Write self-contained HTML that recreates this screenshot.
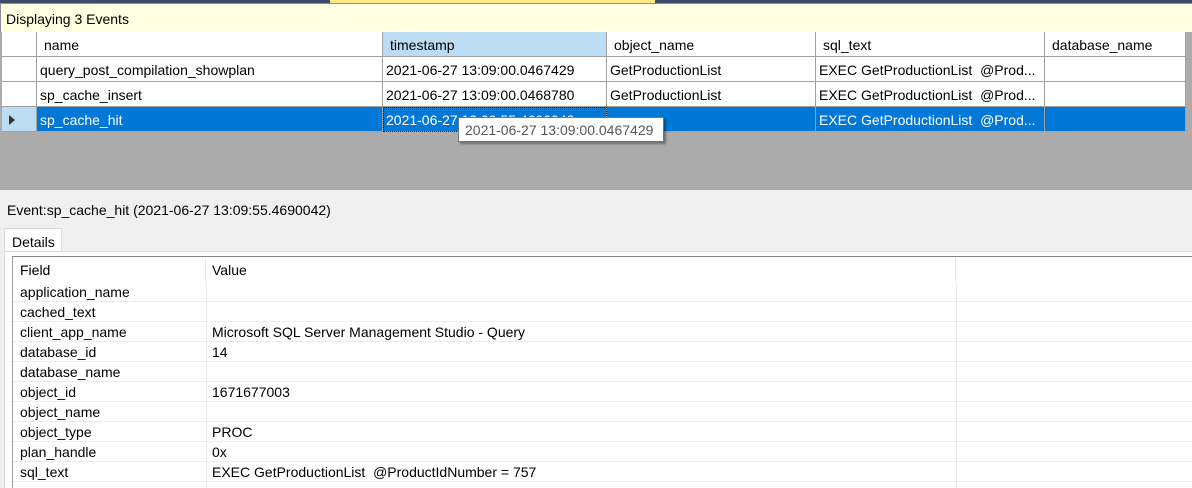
<!DOCTYPE html>
<html><head><style>
*{margin:0;padding:0;box-sizing:border-box}
body{width:1192px;height:488px;overflow:hidden;background:#f0f0f0;font-family:"Liberation Sans",sans-serif;font-size:14px;color:#000;position:relative}
.a{position:absolute;white-space:nowrap}
.c{position:absolute;line-height:27px;padding-left:3px;border-right:1px solid #a0a0a0;border-bottom:1px solid #a0a0a0;overflow:hidden;white-space:nowrap}
.f{position:absolute;left:20px;line-height:21px}
.v{position:absolute;left:212px;line-height:21px}
.sep{position:absolute;left:13px;right:0;height:1px;background:#ececec}
</style></head><body>
<div class="a" style="left:0;top:0;width:1192px;height:3px;background:#3b4c6b"></div>
<div class="a" style="left:330px;top:0;width:325px;height:3px;background:#ffe88c"></div>
<div class="a" style="left:0;top:3px;width:1192px;height:29px;background:#ffffe1;border-top:1px solid #8a8f9a;border-left:1px solid #8a8f9a;padding:7px 0 0 5px">Displaying 3 Events</div>
<div class="a" style="left:0;top:32px;width:1192px;height:158px;background:#ababab"></div>
<div class="a" style="left:2px;top:32px;width:1184px;height:100px;background:#fff"></div>
<!-- header -->
<div class="c" style="left:2px;top:32px;width:35px;height:25px"></div>
<div class="c" style="left:37px;top:32px;width:346px;height:25px;padding-left:7px">name</div>
<div class="c" style="left:383px;top:32px;width:224px;height:25px;background:#bcdcf4;padding-left:7px">timestamp</div>
<div class="c" style="left:607px;top:32px;width:209px;height:25px;padding-left:7px">object_name</div>
<div class="c" style="left:816px;top:32px;width:229px;height:25px;padding-left:7px">sql_text</div>
<div class="c" style="left:1045px;top:32px;width:141px;height:25px;padding-left:7px">database_name</div>
<!-- row1 -->
<div class="c" style="left:2px;top:57px;width:35px;height:25px"></div>
<div class="c" style="left:37px;top:57px;width:346px;height:25px">query_post_compilation_showplan</div>
<div class="c" style="left:383px;top:57px;width:224px;height:25px">2021-06-27 13:09:00.0467429</div>
<div class="c" style="left:607px;top:57px;width:209px;height:25px">GetProductionList</div>
<div class="c" style="left:816px;top:57px;width:229px;height:25px">EXEC GetProductionList &nbsp;@Prod...</div>
<div class="c" style="left:1045px;top:57px;width:141px;height:25px"></div>
<!-- row2 -->
<div class="c" style="left:2px;top:82px;width:35px;height:25px"></div>
<div class="c" style="left:37px;top:82px;width:346px;height:25px">sp_cache_insert</div>
<div class="c" style="left:383px;top:82px;width:224px;height:25px">2021-06-27 13:09:00.0468780</div>
<div class="c" style="left:607px;top:82px;width:209px;height:25px">GetProductionList</div>
<div class="c" style="left:816px;top:82px;width:229px;height:25px">EXEC GetProductionList &nbsp;@Prod...</div>
<div class="c" style="left:1045px;top:82px;width:141px;height:25px"></div>
<!-- row3 -->
<div class="c" style="left:2px;top:107px;width:35px;height:25px;background:#bcdcf4"><span style="position:absolute;left:7px;top:8px;width:0;height:0;border-left:6px solid #333;border-top:5px solid transparent;border-bottom:5px solid transparent"></span></div>
<div class="c" style="left:37px;top:107px;width:346px;height:25px;background:#0078d7;color:#fff">sp_cache_hit</div>
<div class="c" style="left:383px;top:107px;width:224px;height:25px;background:#0078d7;color:#fff;outline:1px dotted #222;outline-offset:-1px">2021-06-27 13:09:55.4690042</div>
<div class="c" style="left:607px;top:107px;width:209px;height:25px;background:#0078d7;color:#fff"></div>
<div class="c" style="left:816px;top:107px;width:229px;height:25px;background:#0078d7;color:#fff">EXEC GetProductionList &nbsp;@Prod...</div>
<div class="c" style="left:1045px;top:107px;width:141px;height:25px;background:#0078d7"></div>
<!-- tooltip -->
<div class="a" style="left:458px;top:117px;width:206px;height:25px;background:#fff;border:1px solid #767676;box-shadow:2px 2px 2px rgba(0,0,0,.35);color:#575757;line-height:24px;padding-left:6px">2021-06-27 13:09:00.0467429</div>
<!-- lower -->
<div class="a" style="left:7px;top:202px">Event:sp_cache_hit (2021-06-27 13:09:55.4690042)</div>
<div class="a" style="left:4px;top:228px;width:58px;height:24px;background:#fff;border:1px solid #d9d9d9;border-bottom:none;padding:5px 0 0 7px">Details</div>
<div class="a" style="left:4px;top:251px;width:1188px;height:237px;background:#fff;border-left:1px solid #d9d9d9;border-top:1px solid #d9d9d9"></div>
<div class="a" style="left:12px;top:256px;width:1180px;height:232px;background:#fff;border-top:1px solid #828790;border-left:1px solid #a0a0a0"></div>
<div class="a" style="left:205px;top:258px;width:1px;height:24px;background:#e5e5e5"></div>
<div class="a" style="left:955px;top:258px;width:1px;height:24px;background:#e5e5e5"></div>
<div class="a" style="left:206px;top:282px;width:1px;height:206px;background:#ececec"></div>
<div class="a" style="left:956px;top:282px;width:1px;height:206px;background:#ececec"></div>
<div class="a" style="left:20px;top:262px">Field</div>
<div class="a" style="left:212px;top:262px">Value</div>
<div class="sep" style="top:301px"></div><div class="sep" style="top:321px"></div><div class="sep" style="top:341px"></div><div class="sep" style="top:361px"></div><div class="sep" style="top:381px"></div><div class="sep" style="top:401px"></div><div class="sep" style="top:421px"></div><div class="sep" style="top:441px"></div><div class="sep" style="top:461px"></div><div class="sep" style="top:481px"></div>
<div class="f" style="top:282px">application_name</div>
<div class="f" style="top:302px">cached_text</div>
<div class="f" style="top:322px">client_app_name</div><div class="v" style="top:322px">Microsoft SQL Server Management Studio - Query</div>
<div class="f" style="top:342px">database_id</div><div class="v" style="top:342px">14</div>
<div class="f" style="top:362px">database_name</div>
<div class="f" style="top:382px">object_id</div><div class="v" style="top:382px">1671677003</div>
<div class="f" style="top:402px">object_name</div>
<div class="f" style="top:422px">object_type</div><div class="v" style="top:422px">PROC</div>
<div class="f" style="top:442px">plan_handle</div><div class="v" style="top:442px">0x</div>
<div class="f" style="top:462px">sql_text</div><div class="v" style="top:462px">EXEC GetProductionList &nbsp;@ProductIdNumber = 757</div>
</body></html>
